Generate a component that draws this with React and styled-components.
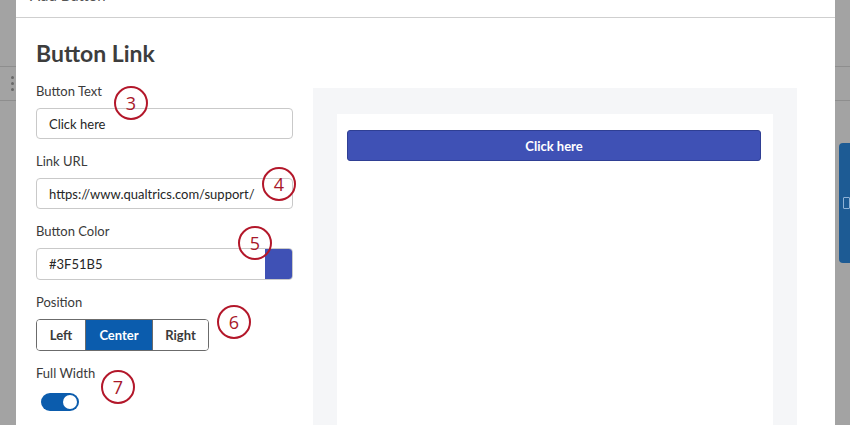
import React from "react";
import styled, { createGlobalStyle } from "styled-components";

const GlobalStyle = createGlobalStyle`
  html, body {
    margin: 0;
    padding: 0;
    background: #a3a3a3;
    overflow: hidden;
  }
  body {
    font-family: Lato, "Liberation Sans", sans-serif;
    color: #333;
  }
`;

export default function App() {
  return (
    <>
      <GlobalStyle />
      <Page>
        <SideStrip>
          <StripBand>
            <Dots>
              <Dot />
              <Dot />
              <Dot />
            </Dots>
          </StripBand>
        </SideStrip>

        <Modal>
          <ModalHeader>
            <HeaderTitle>Add Button</HeaderTitle>
            <CloseButton>×</CloseButton>
          </ModalHeader>

          <ModalBody>
            <FormColumn>
              <Title>Button Link</Title>

              <Field>
                <Label>Button Text</Label>
                <TextInput>Click here</TextInput>
                <Marker $left={78} $top={3}>3</Marker>
              </Field>

              <Field>
                <Label>Link URL</Label>
                <TextInput>https://www.qualtrics.com/support/</TextInput>
                <Marker $left={226} $top={14}>4</Marker>
              </Field>

              <Field>
                <Label>Button Color</Label>
                <ColorInput>
                  <ColorValue>#3F51B5</ColorValue>
                  <Swatch $color="#3F51B5" />
                </ColorInput>
                <Marker $left={202} $top={3}>5</Marker>
              </Field>

              <Field>
                <Label>Position</Label>
                <Segmented>
                  <Segment $w={48}>Left</Segment>
                  <Segment $w={66} $active>Center</Segment>
                  <Segment $w={55}>Right</Segment>
                </Segmented>
                <Marker $left={181} $top={11}>6</Marker>
              </Field>

              <Field>
                <Label>Full Width</Label>
                <Toggle>
                  <Knob />
                </Toggle>
                <Marker $left={65} $top={5}>7</Marker>
              </Field>
            </FormColumn>

            <Preview>
              <PreviewCard>
                <PreviewButton $color="#3F51B5">Click here</PreviewButton>
              </PreviewCard>
            </Preview>
          </ModalBody>
        </Modal>

        <SideStrip>
          <StripBand />
          <SideTab>
            <TabBox />
          </SideTab>
        </SideStrip>
      </Page>
    </>
  );
}

const Page = styled.div`
  display: grid;
  grid-template-columns: 16px 819px 15px;
  height: 425px;
  overflow: hidden;
`;

const SideStrip = styled.div`
  display: flex;
  flex-direction: column;
  padding-top: 66px;
  background: #a3a3a3;
`;

const StripBand = styled.div`
  height: 33px;
  border-top: 1px solid #8e8e8e;
  border-bottom: 1px solid #8e8e8e;
  display: flex;
  align-items: center;
  justify-content: flex-end;
  padding-right: 2px;
`;

const Dots = styled.div`
  display: flex;
  flex-direction: column;
  gap: 3px;
`;

const Dot = styled.span`
  width: 3px;
  height: 3px;
  border-radius: 50%;
  background: #6a6a6a;
`;

const SideTab = styled.div`
  margin-top: 42px;
  margin-left: 4px;
  height: 120px;
  background: #1d5b94;
  border-radius: 4px 0 0 4px;
  display: flex;
  align-items: center;
  padding-left: 4px;
`;

const TabBox = styled.div`
  width: 8px;
  height: 10px;
  border: 1px solid #8fb2d6;
  border-radius: 1px;
`;

const Modal = styled.div`
  background: #fff;
  display: flex;
  flex-direction: column;
`;

const ModalHeader = styled.div`
  height: 17px;
  border-bottom: 1px solid #cfcfcf;
  display: flex;
  align-items: flex-end;
  justify-content: space-between;
  padding: 0 26px 0 14px;
  overflow: hidden;
`;

const HeaderTitle = styled.span`
  font-size: 15px;
  line-height: 15px;
  margin-bottom: 14px;
  color: #555;
`;

const CloseButton = styled.span`
  font-size: 16px;
  line-height: 16px;
  margin-bottom: 14px;
  color: #999;
`;

const ModalBody = styled.div`
  display: grid;
  grid-template-columns: 257px 484px;
  column-gap: 20px;
  align-items: start;
  padding: 22px 0 0 20px;
`;

const FormColumn = styled.div`
  display: flex;
  flex-direction: column;
  gap: 14px;
`;

const Title = styled.h2`
  margin: 0 0 3px;
  font-size: 23px;
  line-height: 26px;
  font-weight: 700;
  color: #3d3d3d;
`;

const Field = styled.div`
  position: relative;
  display: flex;
  flex-direction: column;
  gap: 8px;
`;

const Label = styled.div`
  font-size: 13px;
  line-height: 17px;
  color: #3a3a3a;
`;

const TextInput = styled.div`
  height: 31px;
  box-sizing: border-box;
  border: 1px solid #c9c9c9;
  border-radius: 4px;
  padding: 0 12px;
  display: flex;
  align-items: center;
  font-size: 13px;
  color: #262626;
`;

const ColorInput = styled.div`
  height: 32px;
  box-sizing: border-box;
  border: 1px solid #c9c9c9;
  border-radius: 4px;
  display: flex;
  align-items: stretch;
  overflow: hidden;
  width: 257px;
`;

const ColorValue = styled.div`
  flex: 1;
  display: flex;
  align-items: center;
  padding: 0 12px;
  font-size: 13px;
  color: #262626;
`;

const Swatch = styled.div`
  width: 27px;
  background: ${(p) => p.$color};
`;

const Segmented = styled.div`
  display: flex;
  width: fit-content;
  height: 32px;
  box-sizing: border-box;
  border: 1px solid #6b6b6b;
  border-radius: 4px;
  overflow: hidden;
`;

const Segment = styled.div`
  width: ${(p) => p.$w}px;
  display: flex;
  align-items: center;
  justify-content: center;
  font-size: 13px;
  font-weight: 700;
  color: ${(p) => (p.$active ? "#fff" : "#3a3a3a")};
  background: ${(p) => (p.$active ? "#0b5cad" : "#fff")};
  & + & {
    border-left: 1px solid #6b6b6b;
  }
`;

const Toggle = styled.div`
  margin: 3px 0 0 5px;
  width: 38px;
  height: 18px;
  box-sizing: border-box;
  border-radius: 9px;
  background: #0b5cad;
  display: flex;
  align-items: center;
  justify-content: flex-end;
  padding-right: 2px;
`;

const Knob = styled.div`
  width: 14px;
  height: 14px;
  border-radius: 50%;
  background: #fff;
`;

const Marker = styled.div`
  position: absolute;
  left: ${(p) => p.$left}px;
  top: ${(p) => p.$top}px;
  width: 34px;
  height: 34px;
  box-sizing: border-box;
  border: 2px solid #b3172a;
  border-radius: 50%;
  display: flex;
  align-items: center;
  justify-content: center;
  font-family: "Open Sans", "Liberation Sans", sans-serif;
  font-size: 18px;
  color: #a8182a;
`;

const Preview = styled.div`
  margin-top: 48px;
  background: #f5f6f8;
  padding: 26px 24px 0;
  display: flex;
  flex-direction: column;
`;

const PreviewCard = styled.div`
  flex: 1;
  background: #fff;
  padding: 16px 12px 0 10px;
  min-height: 320px;
`;

const PreviewButton = styled.div`
  height: 31px;
  box-sizing: border-box;
  border-radius: 3px;
  border: 1px solid #2f3f94;
  background: ${(p) => p.$color};
  color: #fff;
  font-size: 13px;
  font-weight: 700;
  display: flex;
  align-items: center;
  justify-content: center;
`;
